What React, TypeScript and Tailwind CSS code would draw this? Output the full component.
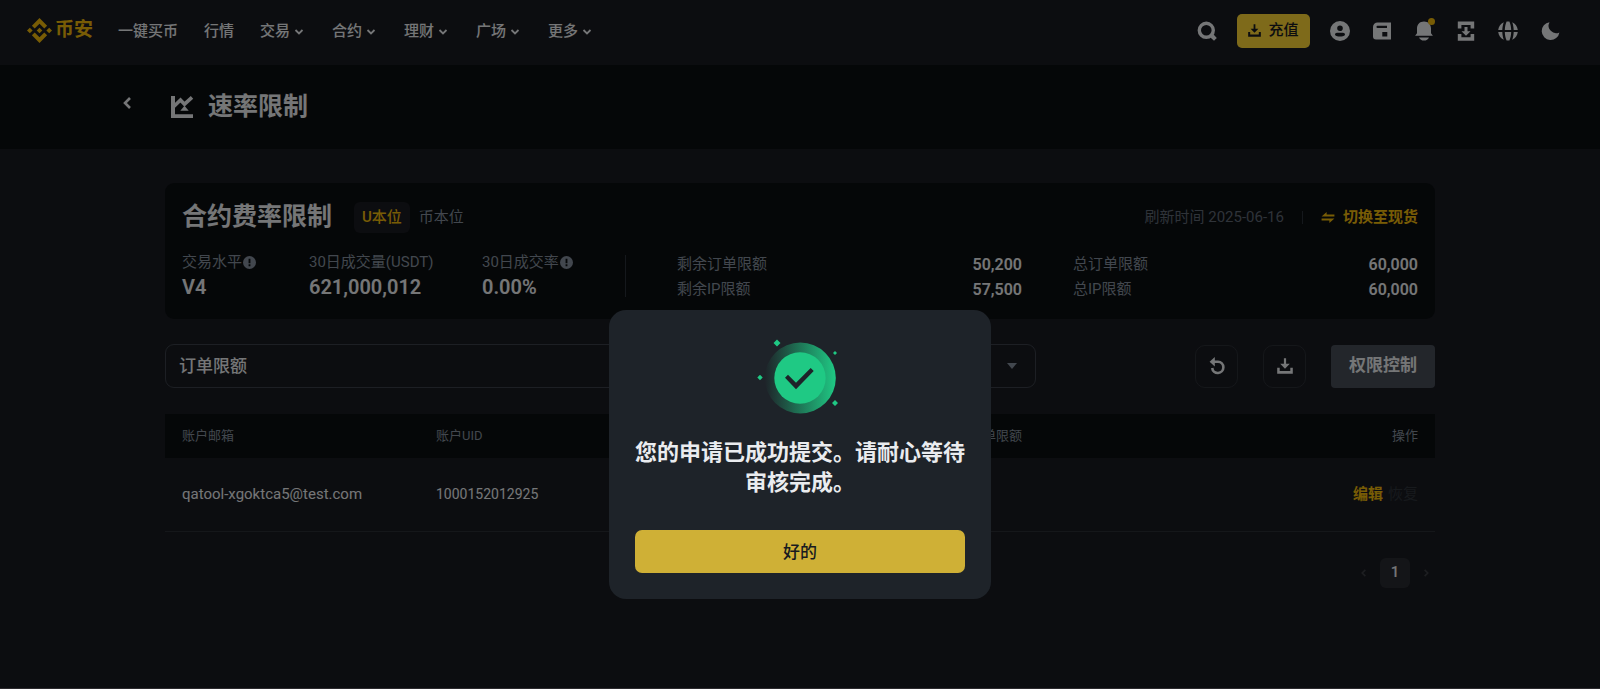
import React from 'react';

type IconProps = {
  className?: string;
};

type StatProps = {
  label: string;
  value: string;
  width: string;
  hasInfo?: boolean;
};

type LimitProps = {
  label: string;
  value: string;
};

const navItems = [
  { label: '一键买币', hasMenu: false },
  { label: '行情', hasMenu: false },
  { label: '交易', hasMenu: true },
  { label: '合约', hasMenu: true },
  { label: '理财', hasMenu: true },
  { label: '广场', hasMenu: true },
  { label: '更多', hasMenu: true },
];

const accounts = [{ email: 'qatool-xgoktca5@test.com', uid: '1000152012925' }];

const LogoIcon: React.FC<IconProps> = ({ className }) => (
  <svg viewBox="0 0 24 24" className={className} fill="currentColor" aria-hidden="true">
    <path d="M7.4 10.1 12 5.5l4.6 4.6 2.7-2.7L12 0 4.7 7.4zM0 12l2.7-2.7L5.4 12l-2.7 2.7zM7.4 13.9l4.6 4.6 4.6-4.6 2.7 2.7L12 24l-7.3-7.4zM18.6 12l2.7-2.7L24 12l-2.7 2.7zM14.7 12 12 14.7 9.3 12 12 9.3z" />
  </svg>
);

const ChevronDown: React.FC<IconProps> = ({ className }) => (
  <svg viewBox="0 0 14 14" className={className} fill="none" stroke="currentColor" strokeWidth="1.8" aria-hidden="true">
    <path d="M3.5 5L7 8.500 10.500 5" />
  </svg>
);

const ChevronSide: React.FC<IconProps> = ({ className }) => (
  <svg viewBox="0 0 8 12" className={className} fill="none" stroke="currentColor" strokeWidth="2.6" aria-hidden="true">
    <path d="M7 1L2 6l5 5" />
  </svg>
);

const SearchIcon: React.FC<IconProps> = ({ className }) => (
  <svg viewBox="0 0 24 24" className={className} aria-hidden="true">
    <circle cx="11.3" cy="11.3" r="7" fill="none" stroke="currentColor" strokeWidth="3.4" />
    <path d="M15.4 18.600l3.200-3.200 3.200 3.600-2.800 2.700z" fill="currentColor" />
  </svg>
);

const DownloadIcon: React.FC<IconProps> = ({ className }) => (
  <svg viewBox="0 0 16 16" className={className} fill="currentColor" aria-hidden="true">
    <path d="M6.900 .3h2.200v5.500h3.700L8 10.800 3.200 5.800h3.700zM.2 9.800h2.500V13h10.600V9.800h2.500v5.900H.2z" />
  </svg>
);

const UserIcon: React.FC<IconProps> = ({ className }) => (
  <svg viewBox="0 0 24 24" className={className} fill="currentColor" fillRule="evenodd" aria-hidden="true">
    <path d="M12 2a10 10 0 1 0 0 20 10 10 0 0 0 0-20zm0 4.400a2.800 2.800 0 1 1 0 5.600 2.800 2.800 0 0 1 0-5.600zM7 16c0-1.500.8-2.200 2-2.200h6c1.200 0 2 .7 2 2.200-1.100 1.100-3 1.600-5 1.600S8.100 17.100 7 16z" />
  </svg>
);

const WalletIcon: React.FC<IconProps> = ({ className }) => (
  <svg viewBox="0 0 24 24" className={className} fill="currentColor" fillRule="evenodd" aria-hidden="true">
    <path d="M21 3.500H7.500A4.500 4.500 0 0 0 3 8v9.500a3 3 0 0 0 3 3h15zM7.600 6.800h9.400v2.300H7.600a1.150 1.150 0 0 1 0-2.300zM12.300 13h5v4.500h-5z" />
  </svg>
);

const BellIcon: React.FC<IconProps> = ({ className }) => (
  <svg viewBox="0 0 24 24" className={className} fill="currentColor" aria-hidden="true">
    <path d="M12 2.500c-4.200 0-7 2.800-7 7v4.800l-1.900 2.500h17.800L19 14.300V9.500c0-4.200-2.800-7-7-7zM7 18.400h10c-.8 1.900-2.700 3.200-5 3.200s-4.200-1.300-5-3.200z" />
  </svg>
);

const TransferIcon: React.FC<IconProps> = ({ className }) => (
  <svg viewBox="0 0 24 24" className={className} fill="currentColor" aria-hidden="true">
    <path d="M3.800 2.500h16.400v7h-3.600V6H7.400v3.500H3.800zM3.800 15h3.600v3.200h9.200V15h3.600v6.800H3.800zM10.500 8h3v4.200h3L12 16.800l-4.500-4.600h3z" />
  </svg>
);

const GlobeIcon: React.FC<IconProps> = ({ className }) => (
  <svg viewBox="0 0 24 24" className={className} fill="currentColor" aria-hidden="true">
    <path d="M10.600 2.500h2.800c1.100 2.500 1.700 5.400 1.800 8.500H8.800c.1-3.100.7-6 1.800-8.500zM7.800 3.200C6.900 5.500 6.400 8.200 6.300 11H2.200c.4-3.500 2.600-6.400 5.600-7.800zM16.200 3.200c3 1.400 5.200 4.300 5.600 7.800h-4.100c-.1-2.800-.6-5.500-1.500-7.800zM2.200 13h4.100c.1 2.800.6 5.500 1.500 7.800-3-1.400-5.200-4.300-5.600-7.800zM8.800 13h6.400c-.1 3.100-.7 6-1.800 8.500h-2.800C9.500 19 8.900 16.100 8.800 13zM17.700 13h4.100c-.4 3.500-2.600 6.400-5.600 7.800.9-2.300 1.400-5 1.500-7.800z" />
  </svg>
);

const MoonIcon: React.FC<IconProps> = ({ className }) => (
  <svg viewBox="0 0 24 24" className={className} fill="currentColor" aria-hidden="true">
    <path d="M11.500 3.200a7.500 7.500 0 0 0 9.900 10.200A8.900 8.900 0 1 1 11.500 3.200z" />
  </svg>
);

const ChartIcon: React.FC<IconProps> = ({ className }) => (
  <svg viewBox="0 0 24 24" className={className} fill="currentColor" aria-hidden="true">
    <path d="M1 1h4v18.200h18V23H1z" />
    <path d="M3.500 11.800l7-6.800 4 4.200L22 2.400" fill="none" stroke="currentColor" strokeWidth="3.600" />
    <path d="M14.500 10.800l4.200 5h-8.400z" />
  </svg>
);

const SwapIcon: React.FC<IconProps> = ({ className }) => (
  <svg viewBox="0 0 14 12" className={className} fill="currentColor" aria-hidden="true">
    <path d="M5.500 0v2.800H14V5H0zM8.500 12V9.200H0V7h14z" />
  </svg>
);

const InfoIcon: React.FC<IconProps> = ({ className }) => (
  <svg viewBox="0 0 14 14" className={className} fill="currentColor" fillRule="evenodd" aria-hidden="true">
    <path d="M7 0a7 7 0 1 0 0 14A7 7 0 0 0 7 0zM6 3h2v4.800H6zm0 6h2v2H6z" />
  </svg>
);

const ResetIcon: React.FC<IconProps> = ({ className }) => (
  <svg viewBox="0 0 16 18" className={className} aria-hidden="true">
    <path d="M3.500 4.800H9A5.600 5.600 0 1 1 3.200 11" fill="none" stroke="currentColor" strokeWidth="2.600" />
    <path d="M5.800 0v9.600L.6 4.800z" fill="currentColor" />
  </svg>
);

const SuccessIcon: React.FC<IconProps> = ({ className }) => (
  <svg viewBox="0 0 96 96" className={className} aria-hidden="true">
    <defs>
      <linearGradient id="ring" x1="0" y1="0" x2="1" y2="0">
        <stop offset="0" stopColor="#1fc984" stopOpacity="0" />
        <stop offset="1" stopColor="#1fc984" />
      </linearGradient>
    </defs>
    <circle cx="48.300" cy="48" r="35.500" fill="url(#ring)" />
    <circle cx="48" cy="48" r="25.700" fill="#1fc984" />
    <path d="M33 47.700l3-3 8 8L58.700 38l3 3L44 59.300z" fill="#1e2329" />
    <path
      d="M25 9.500l3.500 3.500-3.500 3.500-3.500-3.500zM83 21l2 2-2 2-2-2zM8 44.800l2.700 2.700L8 50.200l-2.700-2.700zM83 70l3 3-3 3-3-3z"
      fill="#1fc984"
    />
  </svg>
);

const Stat: React.FC<StatProps> = ({ label, value, width, hasInfo = false }) => (
  <div className={`shrink-0 pt-px whitespace-nowrap ${width}`}>
    <div className="flex items-center gap-px text-[15px] leading-[24px] text-[#848e9c]">
      {label}
      {hasInfo && <InfoIcon className="size-[13px] shrink-0" />}
    </div>
    <div className="text-[20px] leading-[26px] font-semibold">{value}</div>
  </div>
);

const Limit: React.FC<LimitProps> = ({ label, value }) => (
  <div className="flex items-center justify-between leading-[25px]">
    <span className="text-[15px] text-[#848e9c]">{label}</span>
    <span className="text-[16px] font-semibold">{value}</span>
  </div>
);

const Header: React.FC = () => (
  <header className="flex h-[65px] items-center justify-between pr-[38px] pb-[4px] pl-[27px]">
    <div className="flex items-center">
      <a href="#" className="flex items-center gap-[3px] text-[19px] font-bold text-[#f0b90b]">
        <LogoIcon className="size-[25px]" />
        币安
      </a>
      <nav className="ml-[25px] flex items-center gap-[26px] pt-[2px] text-[15px] font-medium">
        {navItems.map((item) => (
          <a key={item.label} href="#" className="flex items-center gap-[2px]">
            {item.label}
            {item.hasMenu && <ChevronDown className="size-[14px]" />}
          </a>
        ))}
      </nav>
    </div>
    <div className="flex items-center gap-[18px]">
      <button aria-label="搜索">
        <SearchIcon className="size-[24px]" />
      </button>
      <button className="flex h-[34px] w-[73px] items-center justify-center gap-[7px] rounded-[5px] bg-[#fcd535] text-[15px] font-medium text-[#181a20]">
        <DownloadIcon className="size-[13px]" />
        充值
      </button>
      <button aria-label="账户">
        <UserIcon className="size-[24px]" />
      </button>
      <button aria-label="钱包">
        <WalletIcon className="size-[24px]" />
      </button>
      <button aria-label="通知" className="relative">
        <BellIcon className="size-[24px]" />
        <span className="absolute -top-px right-px size-[7px] rounded-full bg-[#f0b90b]" />
      </button>
      <button aria-label="下载">
        <TransferIcon className="size-[24px]" />
      </button>
      <button aria-label="语言">
        <GlobeIcon className="size-[24px]" />
      </button>
      <button aria-label="主题">
        <MoonIcon className="size-[24px]" />
      </button>
    </div>
  </header>
);

const TitleBar: React.FC = () => (
  <div className="bg-[#0b0e11]">
    <div className="mx-auto flex h-[84px] max-w-[1354px] items-center">
      <button aria-label="返回" className="w-[42px] pb-[8px]">
        <ChevronSide className="h-[12px] w-[8px]" />
      </button>
      <h1 className="flex items-center gap-[9px] text-[25px] font-semibold">
        <span className="flex w-[34px] justify-center">
          <ChartIcon className="size-[24px]" />
        </span>
        速率限制
      </h1>
    </div>
  </div>
);

const SummaryCard: React.FC = () => (
  <section className="rounded-[9px] bg-[#0b0e11] p-[17px]">
    <div className="flex items-center justify-between">
      <div className="flex items-center gap-px">
        <h2 className="w-[171px] text-[25px] leading-[34px] font-semibold">合约费率限制</h2>
        <button className="h-[31px] rounded-[6px] bg-[#181a20] px-[8px] text-[15px] font-medium text-[#f0b90b]">
          U本位
        </button>
        <button className="h-[31px] px-[8px] text-[15px] text-[#848e9c]">币本位</button>
      </div>
      <div className="flex items-center text-[15px]">
        <span className="text-[#5e6673]">刷新时间 2025-06-16</span>
        <span className="mx-[18px] h-[13px] w-px bg-[#2b3139]" />
        <a href="#" className="flex items-center gap-[8px] font-semibold text-[#f0b90b]">
          <SwapIcon className="h-[11px] w-[14px]" />
          切换至现货
        </a>
      </div>
    </div>
    <div className="mt-[15px] flex gap-[51px]">
      <Stat label="交易水平" value="V4" width="w-[76px]" hasInfo />
      <Stat label="30日成交量(USDT)" value="621,000,012" width="w-[122px]" />
      <Stat label="30日成交率" value="0.00%" width="w-[92px]" hasInfo />
      <div className="mt-[6px] h-[42px] w-px bg-[#2b3139]" />
      <div className="flex-1 pt-[3px]">
        <Limit label="剩余订单限额" value="50,200" />
        <Limit label="剩余IP限额" value="57,500" />
      </div>
      <div className="flex-1 pt-[3px]">
        <Limit label="总订单限额" value="60,000" />
        <Limit label="总IP限额" value="60,000" />
      </div>
    </div>
  </section>
);

const Toolbar: React.FC = () => (
  <div className="mt-[25px] flex items-center">
    <div className="flex w-[871px] gap-[16px]">
      <div className="relative w-[480px]">
        <select
          aria-label="限额类型"
          className="h-[44px] w-full appearance-none rounded-[9px] border border-[#3a3f48] px-[13px] pt-[2px] text-[17px] font-medium"
        >
          <option>订单限额</option>
        </select>
        <span className="absolute top-[19px] right-[19px] border-x-[5px] border-t-[6px] border-x-transparent border-t-[#848e9c]" />
      </div>
      <div className="relative flex-1">
        <select
          aria-label="账户"
          className="h-[44px] w-full appearance-none rounded-[9px] border border-[#3a3f48] px-[13px] pt-[2px] text-[17px] font-medium"
        >
          <option>全部</option>
        </select>
        <span className="absolute top-[19px] right-[19px] border-x-[5px] border-t-[6px] border-x-transparent border-t-[#848e9c]" />
      </div>
    </div>
    <div className="ml-auto flex items-center gap-[25px]">
      <button
        aria-label="重置"
        className="flex size-[43px] items-center justify-center rounded-[10px] border border-[#2b2e35]"
      >
        <ResetIcon className="h-[18px] w-[16px]" />
      </button>
      <button
        aria-label="导出"
        className="flex size-[43px] items-center justify-center rounded-[10px] border border-[#2b2e35]"
      >
        <DownloadIcon className="size-[16px]" />
      </button>
      <button className="h-[43px] rounded-[4px] bg-[#474d57] px-[18px] text-[17px] font-semibold">权限控制</button>
    </div>
  </div>
);

const AccountTable: React.FC = () => (
  <table className="mt-[26px] w-full table-fixed text-left text-[15px]">
    <thead className="bg-[#0b0e11] text-[13px] text-[#848e9c]">
      <tr className="h-[44px]">
        <th className="px-[17px] font-normal">账户邮箱</th>
        <th className="px-[17px] font-normal">账户UID</th>
        <th />
        <th className="px-[17px] font-normal">剩余订单限额</th>
        <th className="px-[17px] text-right font-normal">操作</th>
      </tr>
    </thead>
    <tbody>
      {accounts.map((account) => (
        <tr key={account.uid} className="h-[73px] border-b border-[#2b2e35]">
          <td className="px-[17px]">{account.email}</td>
          <td className="px-[17px] text-[14px]">{account.uid}</td>
          <td />
          <td />
          <td className="px-[17px]">
            <div className="flex justify-end gap-[5px]">
              <button className="font-semibold text-[#f0b90b]">编辑</button>
              <button className="text-[#2f343b]" disabled>
                恢复
              </button>
            </div>
          </td>
        </tr>
      ))}
    </tbody>
  </table>
);

const Pagination: React.FC = () => (
  <div className="mt-[26px] flex items-center justify-end gap-[14px] pr-[6px] text-[#3a3d42]">
    <button aria-label="上一页" disabled>
      <ChevronSide className="h-[8px] w-[5px]" />
    </button>
    <button className="size-[30px] rounded-[6px] bg-[#292b31] text-[15px] font-medium text-[#eaecef]">1</button>
    <button aria-label="下一页" disabled>
      <ChevronSide className="h-[8px] w-[5px] rotate-180" />
    </button>
  </div>
);

const SuccessDialog: React.FC = () => (
  <div className="fixed inset-0 flex items-start justify-center border-b border-[#2c2a2e] bg-black/50 pt-[310px]">
    <div
      role="dialog"
      aria-modal="true"
      aria-labelledby="dialog-title"
      className="flex w-[382px] flex-col items-center rounded-[17px] bg-[#1e2329] px-[26px] pt-[20px] pb-[26px]"
    >
      <SuccessIcon className="size-[96px]" />
      <p id="dialog-title" className="mt-[12px] text-center text-[22px] leading-[30px] font-semibold">
        您的申请已成功提交。请耐心等待审核完成。
      </p>
      <button className="mt-[32px] h-[43px] w-full rounded-[7px] bg-[#cfb036] pt-[2px] text-[17px] font-medium text-[#181a20]">
        好的
      </button>
    </div>
  </div>
);

const App: React.FC = () => {
  return (
    <div className="min-h-screen bg-[#181a20] font-[Roboto,'Noto_Sans_CJK_SC',sans-serif] text-[#eaecef]">
      <Header />
      <TitleBar />
      <main className="mx-auto max-w-[1270px] pt-[34px]">
        <SummaryCard />
        <Toolbar />
        <AccountTable />
        <Pagination />
      </main>
      <SuccessDialog />
    </div>
  );
};

export default App;
